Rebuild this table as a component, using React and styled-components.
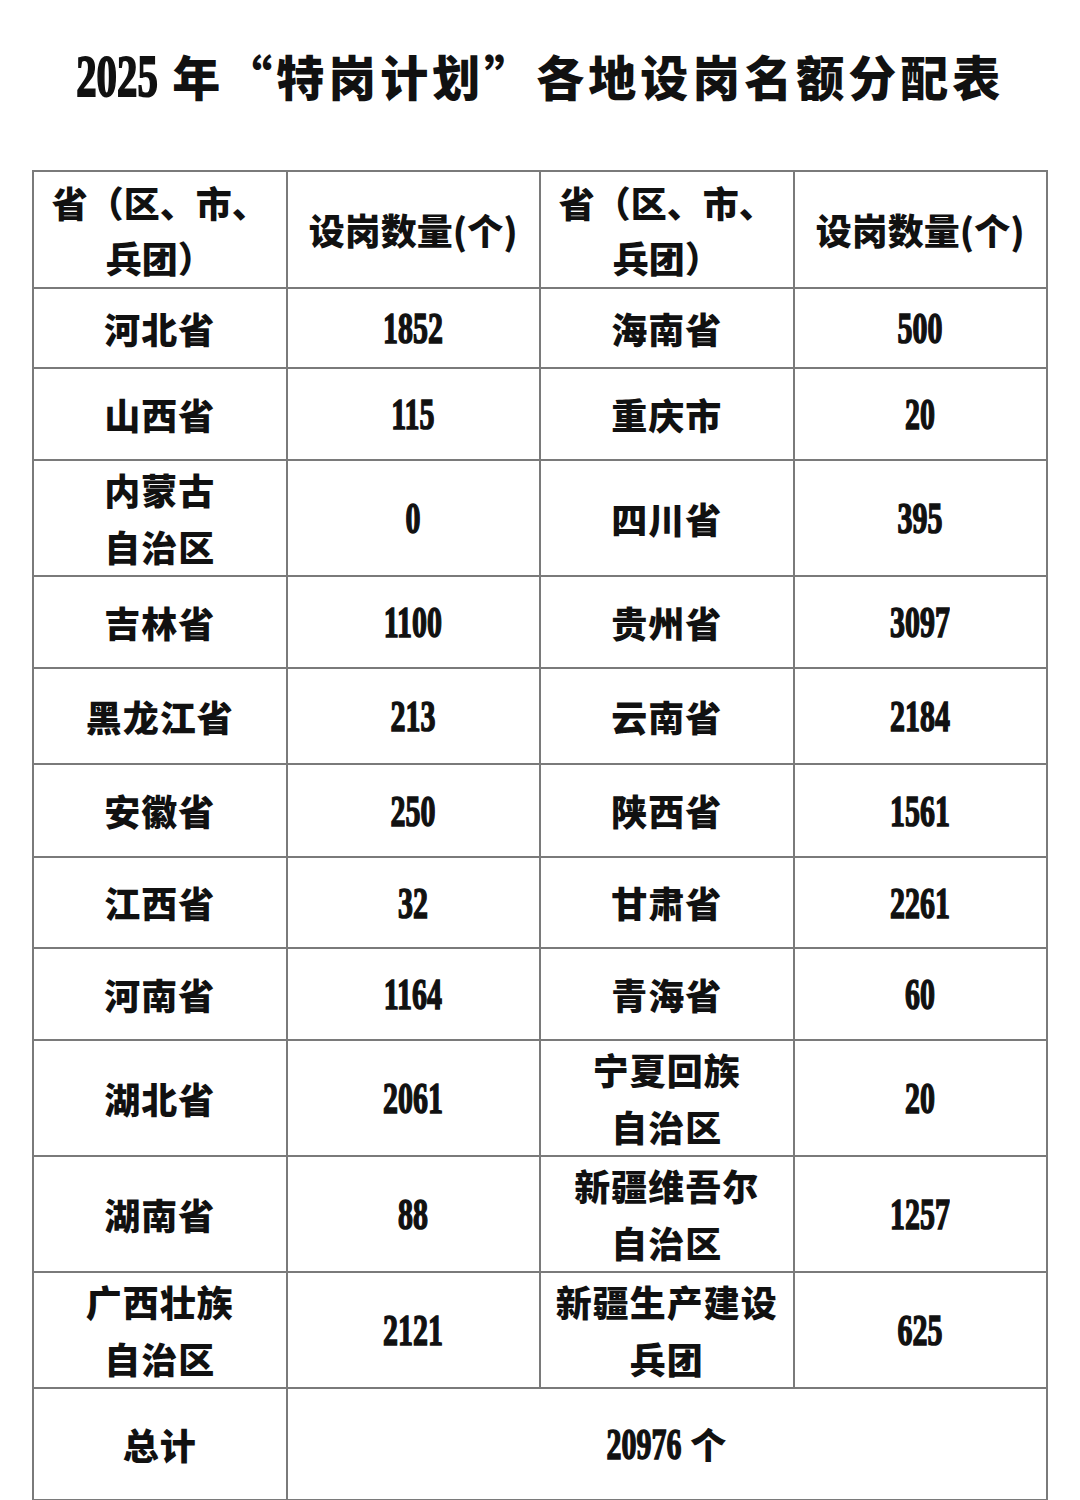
import React from 'react';
import styled, {createGlobalStyle} from 'styled-components';

const GlobalStyle = createGlobalStyle`
    body {
        margin: 0;
        background: #fff;
        color: #111;
        font-family: "Noto Sans CJK SC", "Noto Sans", sans-serif;
    }
`;

const Page = styled.div`
    width: 1080px;
    height: 1500px;
    padding-top: 40px;
    box-sizing: border-box;
`;

const Title = styled.h1`
    margin: 0;
    height: 130px;
    text-align: center;
    font-size: 48px;
    font-weight: 900;
    line-height: 70px;
    letter-spacing: 4px;
`;

// condensed heavy serif digits, squeezed horizontally
const Num = styled.span`
    display: inline-block;
    font-family: "Liberation Serif", "DejaVu Serif", serif;
    font-weight: 700;
    font-size: ${p => p.size || 44}px;
    letter-spacing: 0;
    -webkit-text-stroke: ${p => (p.size || 44) > 50 ? 2 : 1.6}px #111;
    transform: scaleX(0.68);
    margin: 0 ${p => -(p.size || 44) * 0.5 * 0.16 * p.n}px;
`;

const Table = styled.table`
    margin-left: 32px;
    width: 1016px;
    border-collapse: collapse;
    table-layout: fixed;
    border: 2px solid #7a7a7a;
`;

const Row = styled.tr`
    height: ${p => p.h}px;
`;

const Cell = styled.td`
    border: 2px solid #7a7a7a;
    text-align: center;
    vertical-align: middle;
    padding: 0 8px;
    font-size: 36px;
    font-weight: 900;
    line-height: ${p => p.head ? 55 : 57}px;
    letter-spacing: ${p => p.head ? 0 : 1}px;
`;

const Lines = ({text}) => text.split('\n').map((line, i) => <div key={i}>{line}</div>);

const Count = ({value, size}) => <Num size={size} n={value.length}>{value}</Num>;

const rows = [
    [80, '河北省', '1852', '海南省', '500'],
    [92, '山西省', '115', '重庆市', '20'],
    [115, '内蒙古\n自治区', '0', '四川省', '395'],
    [92, '吉林省', '1100', '贵州省', '3097'],
    [96, '黑龙江省', '213', '云南省', '2184'],
    [93, '安徽省', '250', '陕西省', '1561'],
    [91, '江西省', '32', '甘肃省', '2261'],
    [92, '河南省', '1164', '青海省', '60'],
    [115, '湖北省', '2061', '宁夏回族\n自治区', '20'],
    [116, '湖南省', '88', '新疆维吾尔\n自治区', '1257'],
    [116, '广西壮族\n自治区', '2121', '新疆生产建设\n兵团', '625'],
];

export default function App() {
    return (
        <Page>
            <GlobalStyle />
            <Title><Count value="2025" size={60} /> 年“特岗计划”各地设岗名额分配表</Title>
            <Table>
                <tbody>
                    <Row h={117}>
                        <Cell head>省（区、市、兵团）</Cell>
                        <Cell head>设岗数量(个)</Cell>
                        <Cell head>省（区、市、兵团）</Cell>
                        <Cell head>设岗数量(个)</Cell>
                    </Row>
                    {rows.map(([h, a, an, b, bn]) => (
                        <Row h={h} key={a}>
                            <Cell><Lines text={a} /></Cell>
                            <Cell><Count value={an} /></Cell>
                            <Cell><Lines text={b} /></Cell>
                            <Cell><Count value={bn} /></Cell>
                        </Row>
                    ))}
                    <Row h={112}>
                        <Cell>总计</Cell>
                        <Cell colSpan={3}><Count value="20976" /> 个</Cell>
                    </Row>
                </tbody>
            </Table>
        </Page>
    );
}
